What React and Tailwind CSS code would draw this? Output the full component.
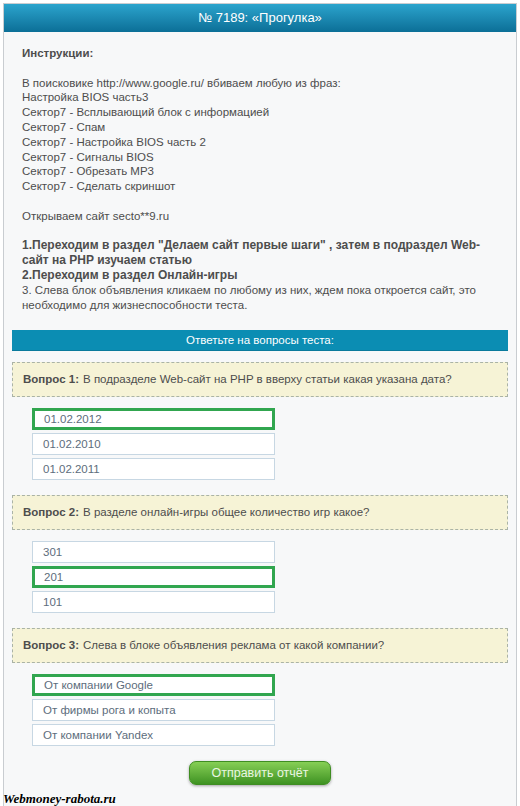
import React from 'react';

const questions = [
  {
    n: 1,
    text: 'В подразделе Web-сайт на PHP в вверху статьи какая указана дата?',
    answers: ['01.02.2012', '01.02.2010', '01.02.2011'],
    picked: 0,
  },
  {
    n: 2,
    text: 'В разделе онлайн-игры общее количество игр какое?',
    answers: ['301', '201', '101'],
    picked: 1,
  },
  {
    n: 3,
    text: 'Слева в блоке объявления реклама от какой компании?',
    answers: ['От компании Google', 'От фирмы рога и копыта', 'От компании Yandex'],
    picked: 0,
  },
];

const phrases = [
  'Настройка BIOS часть3',
  'Сектор7 - Всплывающий блок с информацией',
  'Сектор7 - Спам',
  'Сектор7 - Настройка BIOS часть 2',
  'Сектор7 - Сигналы BIOS',
  'Сектор7 - Обрезать MP3',
  'Сектор7 - Сделать скриншот',
];

const Question = ({ q }) => (
  <div className="mb-[15px]">
    <div className="h-[35px] flex items-center px-[10px] bg-[#f6f3d6] border border-dashed border-[#aab3a6] text-[#4d4d4d]">
      <span className="font-bold mr-[4px]">Вопрос {q.n}:</span>
      <span>{q.text}</span>
    </div>
    <div className="mt-[11px] ml-[20px] flex flex-col gap-[3px]">
      {q.answers.map((a, i) => (
        <div
          key={a}
          className={
            i === q.picked
              ? 'w-[243px] h-[22px] flex items-center pl-[9px] bg-white border-[3px] border-[#31a64f] text-[#5d6d7c]'
              : 'w-[243px] h-[22px] flex items-center pl-[10px] bg-white border border-[#c7d7e3] text-[#5d6d7c]'
          }
        >
          {a}
        </div>
      ))}
    </div>
  </div>
);

export default function App() {
  return (
    <div className="relative w-[520px] h-[806px] overflow-hidden bg-white pt-[3px] px-[3px] font-['Liberation_Sans',Arial,sans-serif] text-[11.5px]">
      <div className="h-[820px] border border-[#c9cdd1] bg-[#f7f8f9]">
        {/* Header */}
        <div className="h-[28px] flex items-center justify-center bg-gradient-to-b from-[#2ba4cd] to-[#0b6f97] text-white text-[13px]">
          № 7189: «Прогулка»
        </div>

        {/* Instructions */}
        <div className="pt-[14px] px-[18px] leading-[14.8px] text-[#4d4d4d]">
          <p className="font-bold">Инструкции:</p>
          <br />
          <p>В поисковике http://www.google.ru/ вбиваем любую из фраз:</p>
          {phrases.map((p) => (
            <p key={p}>{p}</p>
          ))}
          <br />
          <p>Открываем сайт secto**9.ru</p>
          <br />
          <p className="font-bold whitespace-nowrap text-[12px]">
            1.Переходим в раздел "Делаем сайт первые шаги" , затем в подраздел Web-
            <br />
            сайт на PHP изучаем статью
          </p>
          <p className="font-bold text-[12px]">2.Переходим в раздел Онлайн-игры</p>
          <p className="whitespace-nowrap">
            3. Слева блок объявления кликаем по любому из них, ждем пока откроется сайт, это
            <br />
            необходимо для жизнеспособности теста.
          </p>
        </div>

        {/* Test */}
        <div className="mt-[18px] px-[8px]">
          <div className="h-[21px] flex items-center justify-center bg-[#0b8db3] border-b border-[#0a7a9c] text-white">
            Ответьте на вопросы теста:
          </div>
          <div className="mt-[11px]">
            {questions.map((q) => (
              <Question key={q.n} q={q} />
            ))}
          </div>
          <div className="flex justify-center mt-[4px]">
            <button className="w-[142px] h-[24px] rounded-[7px] border border-[#3f8d22] bg-gradient-to-b from-[#86cf55] to-[#3e9322] text-[#eaf6e2] text-[12.5px] shadow-[0_1px_3px_rgba(0,0,0,0.35)]">
              Отправить отчёт
            </button>
          </div>
        </div>
      </div>

      {/* watermark */}
      <div className="absolute left-[3px] bottom-[-2px] font-['Liberation_Serif',serif] italic font-bold text-[13px] text-black [text-shadow:0_0_2px_#fff,0_0_2px_#fff]">
        Webmoney-rabota.ru
      </div>
    </div>
  );
}
